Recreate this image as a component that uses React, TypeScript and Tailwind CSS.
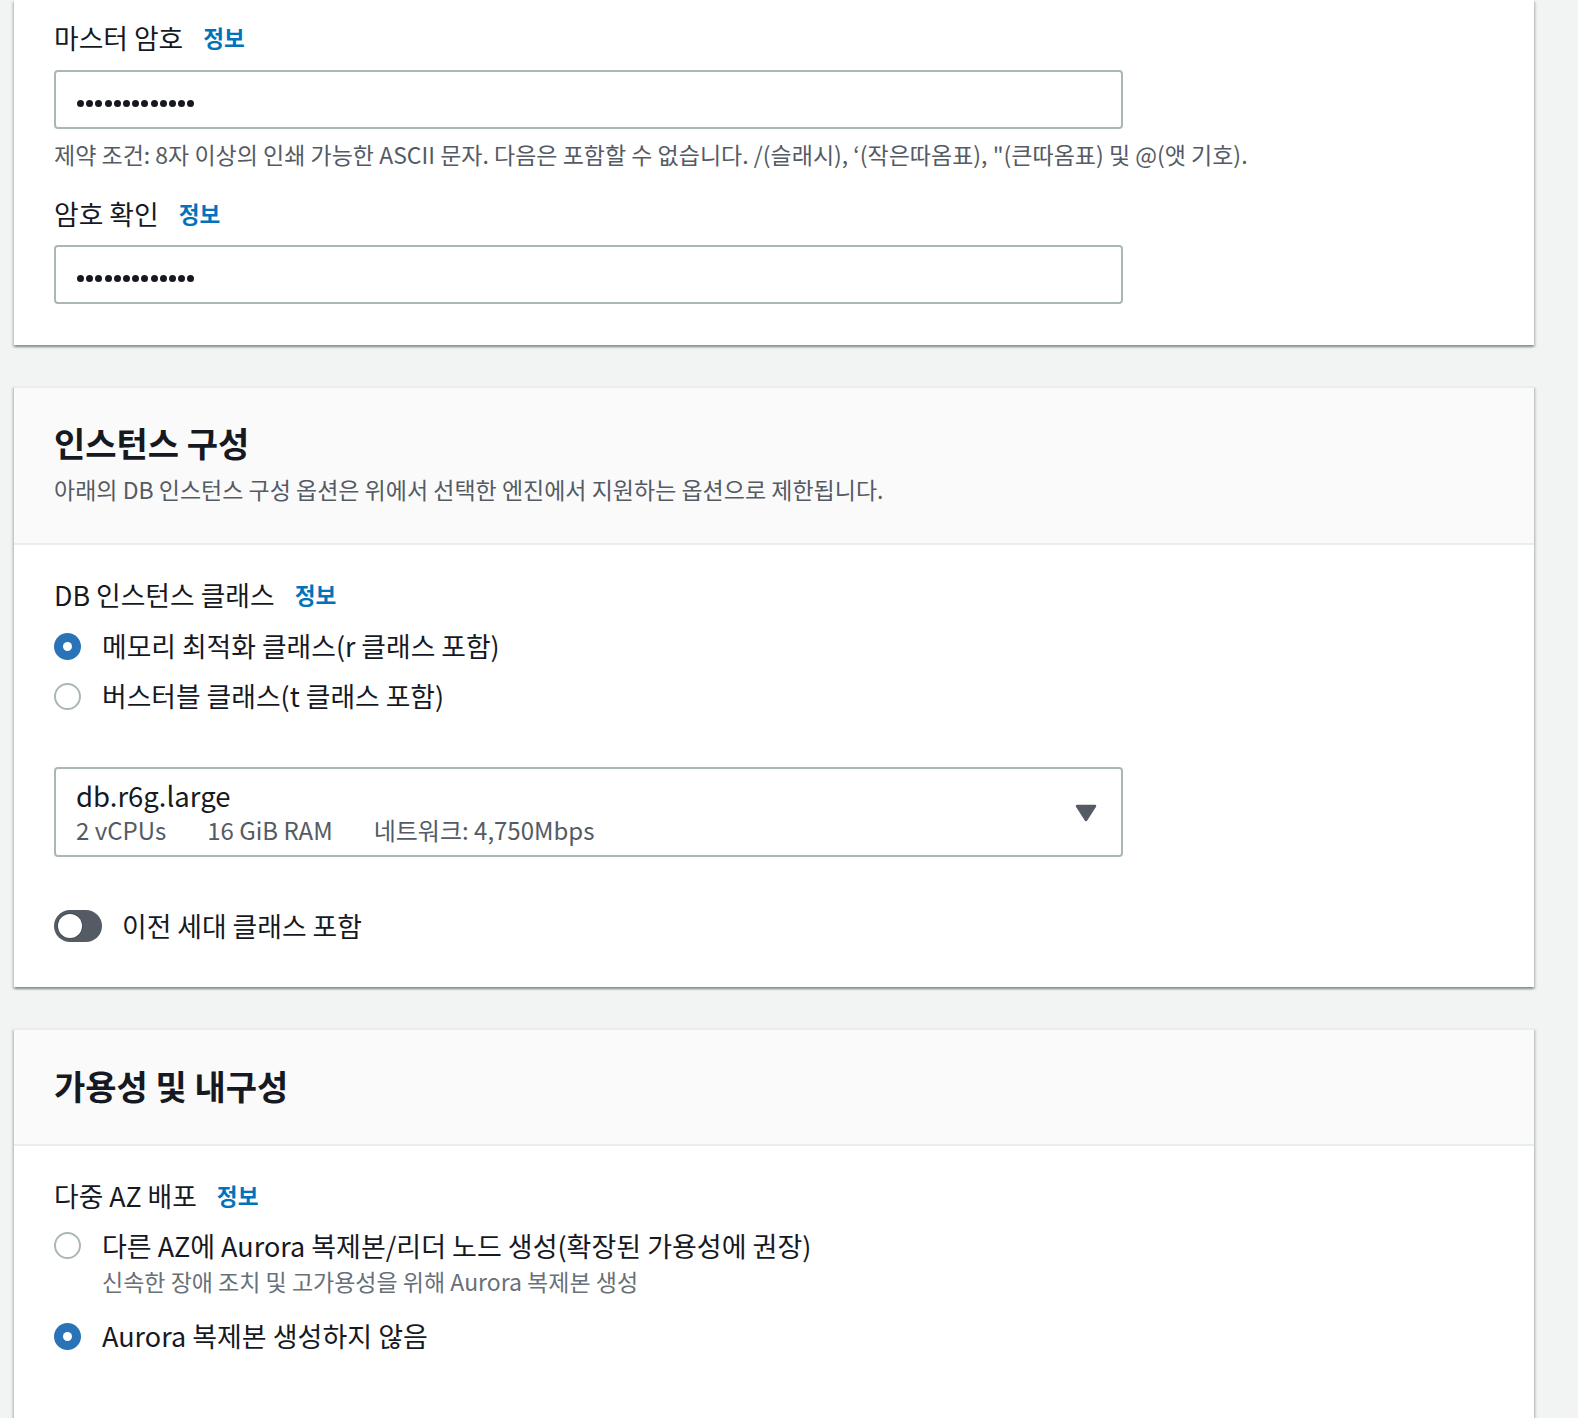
import React from "react";

const FONT = "font-['Noto_Sans_CJK_KR','Noto_Sans',sans-serif]";
const CARD =
  "w-[1520px] bg-white shadow-[0_2px_2px_0_rgba(0,28,36,0.3),2px_2px_2px_0_rgba(0,28,36,0.12),-2px_2px_2px_0_rgba(0,28,36,0.12)]";

function Info({ className = "" }: { className?: string }) {
  return (
    <span className={`text-[22.6px] font-bold text-[#0073bb] ${className}`}>정보</span>
  );
}

function Label({ text }: { text: string }) {
  return (
    <div className="flex items-center h-[34px] leading-[34px]">
      <span className="text-[26.8px] text-[#16191f]">{text}</span>
      <Info className="ml-[20px]" />
    </div>
  );
}

function Dots() {
  return (
    <div className="flex items-center gap-[2.2px] pt-[7px]">
      {Array.from({ length: 13 }).map((_, i) => (
        <span key={i} className="block w-[7px] h-[7px] rounded-full bg-[#16191f]" />
      ))}
    </div>
  );
}

function PasswordInput() {
  return (
    <div className="w-[1069px] h-[59px] border-2 border-[#aab7b8] rounded-[4px] bg-white flex items-center pl-[21px]">
      <Dots />
    </div>
  );
}

function Radio({ checked }: { checked: boolean }) {
  return checked ? (
    <span className="shrink-0 w-[27px] h-[27px] rounded-full bg-[#2b73b7] flex items-center justify-center">
      <span className="block w-[9px] h-[9px] rounded-full bg-white" />
    </span>
  ) : (
    <span className="shrink-0 block w-[27px] h-[27px] rounded-full border-2 border-[#aab7b8] bg-white" />
  );
}

export default function App() {
  return (
    <div className={`${FONT} min-h-[1418px] bg-[#f2f3f3] pl-[14px] text-[#16191f]`}>
      <div className="flex flex-col gap-[41px] pb-[40px]">
        {/* Card 1 */}
        <div className={`${CARD} px-[40px] pt-[21px] pb-[41px]`}>
          <Label text="마스터 암호" />
          <div className="mt-[15px]">
            <PasswordInput />
          </div>
          <div className="mt-[10px] text-[23px] leading-[30px] text-[#545b64] whitespace-nowrap">
            제약 조건: 8자 이상의 인쇄 가능한 ASCII 문자. 다음은 포함할 수 없습니다. /(슬래시), ‘(작은따옴표), "(큰따옴표) 및 @(앳 기호).
          </div>
          <div className="mt-[28px]">
            <Label text="암호 확인" />
          </div>
          <div className="mt-[14px]">
            <PasswordInput />
          </div>
        </div>

        {/* Card 2 */}
        <div className={`${CARD} border-t-2 border-[#eaeded]`}>
          <div className="bg-[#fafafa] px-[40px] pt-[33px] pb-[39px] border-b-2 border-[#eaeded]">
            <div className="text-[34px] font-bold leading-[44px] text-[#16191f]">인스턴스 구성</div>
            <div className="mt-[9px] text-[23px] leading-[30px] text-[#545b64]">
              아래의 DB 인스턴스 구성 옵션은 위에서 선택한 엔진에서 지원하는 옵션으로 제한됩니다.
            </div>
          </div>
          <div className="px-[40px] pt-[33px] pb-[44px]">
            <Label text="DB 인스턴스 클래스" />
            <div className="mt-[9px] flex flex-col">
              <div className="h-[50px] flex items-center">
                <Radio checked />
                <span className="ml-[21px] text-[26.8px] leading-[34px]">메모리 최적화 클래스(r 클래스 포함)</span>
              </div>
              <div className="h-[50px] flex items-center">
                <Radio checked={false} />
                <span className="ml-[21px] text-[26.8px] leading-[34px]">버스터블 클래스(t 클래스 포함)</span>
              </div>
            </div>
            <div className="mt-[46px] w-[1069px] h-[90px] border-2 border-[#aab7b8] rounded-[4px] bg-white flex items-center justify-between pl-[20px] pr-[24px]">
              <div className="flex flex-col">
                <span className="text-[27.5px] leading-[35px] text-[#16191f]">db.r6g.large</span>
                <div className="flex gap-[41px] text-[24px] leading-[34px] text-[#545b64]">
                  <span>2 vCPUs</span>
                  <span>16 GiB RAM</span>
                  <span>네트워크: 4,750Mbps</span>
                </div>
              </div>
              <svg width="22" height="18" viewBox="0 0 22 18" className="mt-[2px]">
                <path d="M2 2 L20 2 L11 16 Z" fill="#545b64" stroke="#545b64" strokeWidth="2.5" strokeLinejoin="round" />
              </svg>
            </div>
            <div className="mt-[52px] flex items-center h-[34px]">
              <span className="w-[48px] h-[32px] rounded-full bg-[#545b64] flex items-center pl-[4px]">
                <span className="block w-[24px] h-[24px] rounded-full bg-white shadow-[0_0_0_1px_rgba(0,0,0,0.15)]" />
              </span>
              <span className="ml-[20px] text-[26.8px] leading-[34px]">이전 세대 클래스 포함</span>
            </div>
          </div>
        </div>

        {/* Card 3 */}
        <div className={`${CARD} border-t-2 border-[#eaeded]`}>
          <div className="bg-[#fafafa] px-[40px] pt-[34px] pb-[36px] border-b-2 border-[#eaeded]">
            <div className="text-[34px] font-bold leading-[44px] text-[#16191f]">가용성 및 내구성</div>
          </div>
          <div className="px-[40px] pt-[33px] pb-[80px]">
            <Label text="다중 AZ 배포" />
            <div className="mt-[16px] flex">
              <div className="mt-[3px] flex">
                <Radio checked={false} />
              </div>
              <div className="ml-[21px] flex flex-col">
                <span className="text-[27px] leading-[34px]">다른 AZ에 Aurora 복제본/리더 노드 생성(확장된 가용성에 권장)</span>
                <span className="mt-[3px] text-[23px] leading-[30px] text-[#687078]">
                  신속한 장애 조치 및 고가용성을 위해 Aurora 복제본 생성
                </span>
              </div>
            </div>
            <div className="mt-[23px] flex items-center h-[34px]">
              <Radio checked />
              <span className="ml-[21px] text-[27px] leading-[34px]">Aurora 복제본 생성하지 않음</span>
            </div>
          </div>
        </div>
      </div>
    </div>
  );
}
